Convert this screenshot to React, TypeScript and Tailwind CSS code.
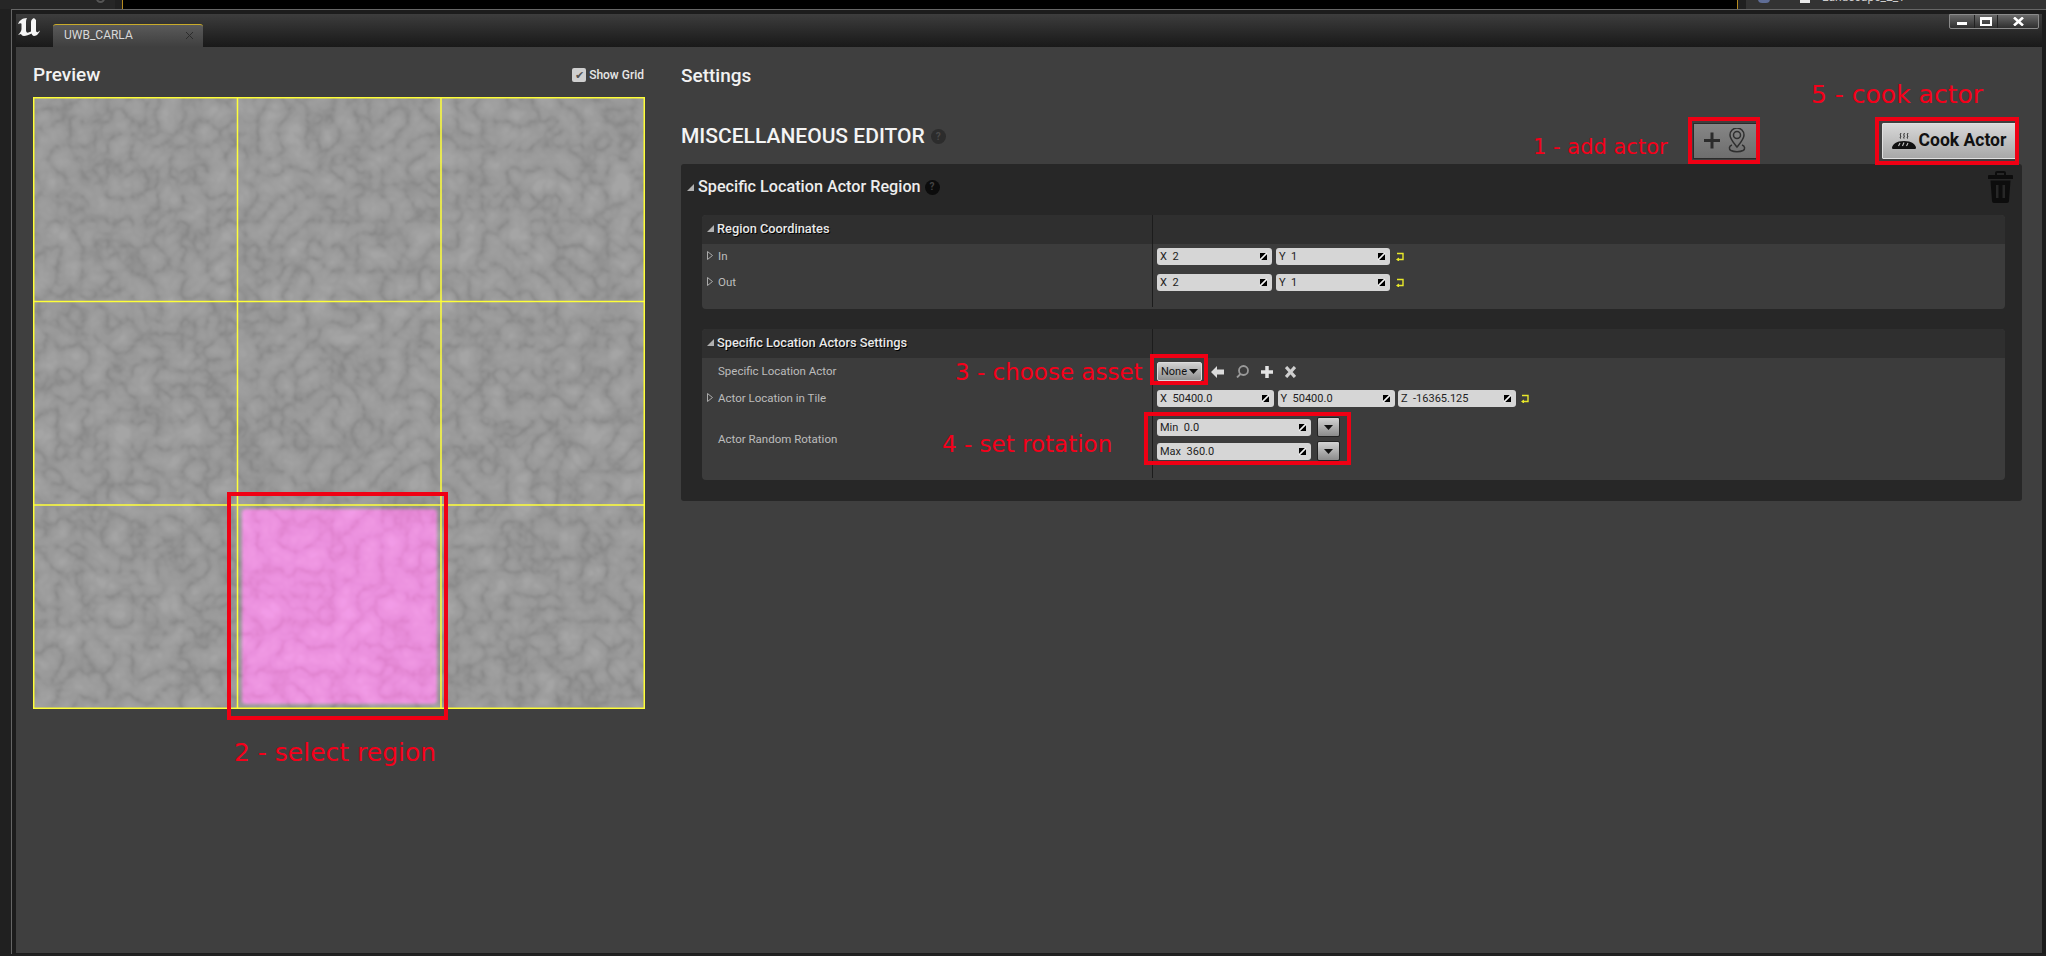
import type { ReactNode } from "react";

function Spinner() {
  return (
    <svg width="9" height="9" viewBox="0 0 9 9" className="shrink-0">
      <polygon points="1,1 7,1 1,7" fill="#000" />
      <polygon points="8,8 2,8 8,2" fill="#000" />
      <line x1="1" y1="8" x2="8" y2="1" stroke="#f4f4f4" strokeWidth="1.200" />
    </svg>
  );
}

function ResetIcon() {
  return (
    <svg width="8" height="9" viewBox="0 0 8 9" className="shrink-0">
      <path d="M1 1.500h6v6H1.500" fill="none" stroke="#e8e82a" strokeWidth="1.400" />
      <path d="M3 5.500v4L0 7.500z" fill="#e8e82a" />
    </svg>
  );
}

function NumberBox({ label, value, className }: { label: string; value: string; className: string }) {
  return (
    <div className={`flex h-[17px] items-center justify-between rounded-[3px] bg-[#d6d6d6] pl-[3px] pr-[4px] text-[11px] leading-none text-[#222] ${className}`}>
      <span className="whitespace-pre">{label}  {value}</span>
      <Spinner />
    </div>
  );
}

function Caret() {
  return (
    <svg width="9" height="5" viewBox="0 0 9 5">
      <polygon points="0,0 9,0 4.500,5" fill="#111" />
    </svg>
  );
}

function ComboButton() {
  return (
    <div className="flex h-[20px] w-[23px] items-center justify-center rounded-[2px] border border-[#222] bg-gradient-to-b from-[#d4d4d4] to-[#8c8c8c]">
      <Caret />
    </div>
  );
}

function Triangle({ open }: { open?: boolean }) {
  if (open) {
    return (
      <svg width="7" height="7" viewBox="0 0 7 7" className="shrink-0">
        <polygon points="7,0 7,7 0,7" fill="#b0b0b0" />
      </svg>
    );
  }
  return (
    <svg width="6" height="9" viewBox="0 0 6 9" className="shrink-0">
      <polygon points="0.500,0.500 5.500,4.500 0.500,8.500" fill="none" stroke="#aaa" strokeWidth="1" />
    </svg>
  );
}

function HelpDot({ dark }: { dark?: boolean }) {
  return (
    <div className={`flex h-[15px] w-[15px] items-center justify-center rounded-full text-[10px] font-bold leading-none ${dark ? "bg-[#0c0c0c] text-[#444]" : "bg-[#2c2c2c] text-[#4a4a4a]"}`}>
      ?
    </div>
  );
}

function GroupHeader({ title }: { title: string }) {
  return (
    <div className="grid h-[29px] grid-cols-[450px_1fr] rounded-t-[4px] bg-[#2f2f2f]">
      <div className="flex items-center gap-[3px] pb-[2px] pl-[5px] text-[12.800px] font-medium text-[#e8e8e8] [text-shadow:1px_1px_0_#000]">
        <Triangle open />
        {title}
      </div>
      <div className="border-l border-[#1c1c1c]" />
    </div>
  );
}

function Row({ label, expand, height, children, labelTop = "pt-[7px]" }: { label: string; expand?: boolean; height: string; children?: ReactNode; labelTop?: string }) {
  return (
    <div className={`grid grid-cols-[450px_1fr] ${height}`}>
      <div className={`flex items-start gap-[5px] pl-[5px] text-[11.500px] leading-none text-[#bdbdbd] ${labelTop}`}>
        <div className="flex w-[6px] justify-center">{expand ? <Triangle /> : null}</div>
        {label}
      </div>
      <div className="border-l border-[#1c1c1c] pl-[4px]">{children}</div>
    </div>
  );
}

function Note({ children, className }: { children: ReactNode; className: string }) {
  return (
    <div className={`absolute whitespace-nowrap font-['DejaVu_Sans',sans-serif] leading-none text-[#f5001a] ${className}`}>
      {children}
    </div>
  );
}

function Marker({ className }: { className: string }) {
  return <div className={`absolute border-[4px] border-[#f00014] ${className}`} />;
}

function TilePreview() {
  return (
    <svg width="612" height="612" viewBox="0 0 612 612" className="block">
      <defs>
        <filter id="marble" x="0" y="0" width="612" height="612" filterUnits="userSpaceOnUse" colorInterpolationFilters="sRGB">
          <feTurbulence type="turbulence" baseFrequency="0.04" numOctaves="3" seed="7" />
          <feColorMatrix values="1.5 0 0 0 0 1.5 0 0 0 0 1.5 0 0 0 0 0 0 0 0 1" />
          <feGaussianBlur stdDeviation="0.9" />
          <feComponentTransfer>
            <feFuncR type="table" tableValues="0.52 0.57 0.6 0.615 0.63 0.65" />
            <feFuncG type="table" tableValues="0.52 0.57 0.6 0.615 0.63 0.65" />
            <feFuncB type="table" tableValues="0.52 0.57 0.6 0.615 0.63 0.65" />
          </feComponentTransfer>
        </filter>
        <filter id="marble-pink" x="0" y="0" width="612" height="612" filterUnits="userSpaceOnUse" colorInterpolationFilters="sRGB">
          <feTurbulence type="turbulence" baseFrequency="0.04" numOctaves="3" seed="7" />
          <feColorMatrix values="1.5 0 0 0 0 1.5 0 0 0 0 1.5 0 0 0 0 0 0 0 0 1" />
          <feGaussianBlur stdDeviation="0.9" />
          <feComponentTransfer>
            <feFuncR type="table" tableValues="0.87 0.9 0.92 0.93 0.94 0.95" />
            <feFuncG type="table" tableValues="0.5 0.54 0.565 0.58 0.595 0.61" />
            <feFuncB type="table" tableValues="0.8 0.84 0.87 0.88 0.89 0.91" />
          </feComponentTransfer>
        </filter>
        <filter id="soft" x="-5%" y="-5%" width="110%" height="110%">
          <feGaussianBlur stdDeviation="1.500" />
        </filter>
        <mask id="pink-cell" maskUnits="userSpaceOnUse" x="0" y="0" width="612" height="612">
          <rect x="209" y="412" width="195" height="195" rx="4" fill="#fff" filter="url(#soft)" />
        </mask>
      </defs>
      <rect width="612" height="612" fill="#9c9c9c" filter="url(#marble)" />
      <g mask="url(#pink-cell)">
        <rect width="612" height="612" fill="#ee90e0" filter="url(#marble-pink)" />
      </g>
      <g fill="none" stroke="#ffff38" strokeWidth="1.500">
        <rect x="0.750" y="0.750" width="610.500" height="610.500" />
        <line x1="204.500" y1="0" x2="204.500" y2="612" />
        <line x1="408" y1="0" x2="408" y2="612" />
        <line x1="0" y1="204.500" x2="612" y2="204.500" />
        <line x1="0" y1="408" x2="612" y2="408" />
      </g>
    </svg>
  );
}

function TrashIcon() {
  return (
    <svg width="25" height="32" viewBox="0 0 25 32" fill="#0d0d0d">
      <path d="M9 0h7a2 2 0 0 1 2 2v2h6a1 1 0 0 1 1 1v3H0V5a1 1 0 0 1 1-1h6V2a2 2 0 0 1 2-2zm0 2v2h7V2z" fillRule="evenodd" />
      <path d="M2.500 9.500h20L21 30a2 2 0 0 1-2 2H6a2 2 0 0 1-2-2zM8 14v13h2.500V14zm6.500 0v13H17V14z" fillRule="evenodd" />
    </svg>
  );
}

function LogoMark() {
  return (
    <svg width="22" height="18" viewBox="0 0 22 18" fill="#f6f6f6">
      <path d="M0 6C1 3 4 0 9 0 8 2 8 3 8 5v7c0 2 1 3 2.500 2.500L13 13.500V4c0-2 1-3 3-4l2 2v10c0 2 1 2.500 2 2l2-1.500C21 15 19 18 16 18c-1 0-2-1-2.500-2.500C11 17 8 18 6 18c-1.500 0-2.500-1-3-2l-3 1c2-2 3.500-4 3.500-6V6C3.500 5 2 5 0 6z" />
    </svg>
  );
}

function WindowButtons() {
  return (
    <div className="flex h-[15px] items-stretch overflow-hidden rounded-b-[2px] border border-[#8a8a8a] bg-gradient-to-b from-[#6a6a6a] to-[#2f2f2f]">
      <div className="flex w-[25px] items-center justify-center border-r border-[#222]">
        <div className="mt-[3px] h-[3px] w-[10px] bg-white" />
      </div>
      <div className="flex w-[23px] items-center justify-center border-r border-[#222]">
        <div className="h-[9px] w-[12px] border-[2px] border-t-[3px] border-white" />
      </div>
      <div className="flex w-[40px] items-center justify-center">
        <svg width="11" height="9" viewBox="0 0 11 9" stroke="#fff" strokeWidth="2.600">
          <path d="M1 0.500l9 8M10 0.500l-9 8" />
        </svg>
      </div>
    </div>
  );
}

function CookIcon() {
  return (
    <svg width="24" height="16" viewBox="0 0 24 16" className="shrink-0">
      <g fill="none" stroke="#111" strokeWidth="1">
        <path d="M8.500 5.500c-1-1 1-2 0-3s1-1.500 0-2.500" />
        <path d="M12 5.500c-1-1 1-2 0-3s1-1.500 0-2.500" />
        <path d="M15.500 5.500c-1-1 1-2 0-3s1-1.500 0-2.500" />
      </g>
      <path d="M0 14.500C1 11 4 8 12 8s11 3 12 6.500c0 .8-.4 1.500-1 1.500H1c-.6 0-1-.7-1-1.500z" fill="#111" />
      <path d="M8 10l-1.500 3M12 9.500l-1.500 3.500M16 10l-1.500 3" stroke="#c4c4c4" strokeWidth="1.100" />
    </svg>
  );
}

function AddActorIcon() {
  return (
    <svg width="42" height="26" viewBox="0 0 42 26">
      <path d="M0 12.500h16M8 4.500v16" stroke="#2b2b2b" strokeWidth="3" fill="none" />
      <g fill="none" stroke="#2f2f2f" strokeWidth="1.500">
        <path d="M33 19c-4-5-7-8-7-12a7 7 0 0 1 14 0c0 4-3 7-7 12z" />
        <circle cx="33" cy="7" r="3.500" />
        <path d="M28 17c-3 1-3.500 4-1 5.500 3 1.500 9 1.500 12 0 2.500-1.500 2-4.500-1-5.500" />
      </g>
    </svg>
  );
}

function PickerIcons() {
  return (
    <div className="ml-[9px] flex items-center gap-[12px]">
      <svg width="13" height="12" viewBox="0 0 13 12" fill="#dcdcdc">
        <path d="M6 0v3.500h7v5H6V12L0 6z" />
      </svg>
      <svg width="13" height="13" viewBox="0 0 13 13" fill="none" stroke="#9a9a9a" strokeWidth="1.800">
        <circle cx="7.500" cy="5.500" r="4.500" />
        <path d="M4.500 9L1 12.500" />
      </svg>
      <svg width="12" height="12" viewBox="0 0 12 12" stroke="#e4e4e4" strokeWidth="3.500">
        <path d="M6 0v12M0 6h12" />
      </svg>
      <svg width="11" height="12" viewBox="0 0 11 12" stroke="#cfcfcf" strokeWidth="3.200">
        <path d="M1 1l9 10M10 1L1 11" />
      </svg>
    </div>
  );
}

export default function App() {
  return (
    <div className="relative h-[956px] w-[2046px] overflow-hidden bg-[#202020] font-['Roboto',sans-serif]">
      {/* what shows of the editor behind the window */}
      <div className="flex h-[9px] overflow-hidden">
        <div className="flex w-[115px] justify-end bg-[#262626] pr-[10px]">
          <div className="-mt-[6px] h-[9px] w-[9px] rounded-full border-2 border-[#555]" />
        </div>
        <div className="ml-[7px] w-[1616px] border-x border-[#b58a1e] bg-black" />
        <div className="ml-[8px] flex flex-1 bg-[#333] pl-[12px] text-[12px] leading-none text-[#ccc]">
          <div className="-mt-[5px] h-[8px] w-[12px] rounded-full bg-[#5f6d96]" />
          <div className="ml-[30px] -mt-[1px] h-[4px] w-[10px] bg-[#e8e8e8]" />
          <div className="ml-[12px] -mt-[9px]">Landscape_2_1</div>
        </div>
      </div>

      <div className="ml-[11px] flex h-[945px] flex-col border-l border-t border-[#666] bg-[#1c1c1c] pl-[4px] pr-[4px] pt-[4px]">
        <div className="flex h-[33px] bg-gradient-to-b from-[#3d3d3d] to-[#191919]">
          <div className="w-[37px] pl-[2px] pt-[4px]">
            <LogoMark />
          </div>
          <div className="mt-[10px] flex w-[150px] items-center justify-between rounded-t-[3px] border-t border-[#c9ab2a] bg-gradient-to-b from-[#5a5a5a] to-[#3f3f3f] pb-[2px] pl-[11px] pr-[10px] text-[12px] text-[#d8d8d8]">
            UWB_CARLA
            <svg width="7" height="7" viewBox="0 0 7 7" stroke="#2b2b2b" strokeWidth="1">
              <path d="M0 0l7 7M7 0L0 7" />
            </svg>
          </div>
          <div className="ml-auto pr-[3px]">
            <WindowButtons />
          </div>
        </div>

        <div className="flex h-[906px] bg-[#3f3f3f]">
          <div className="w-[665px] pl-[17px]">
            <div className="flex h-[50px] items-center justify-between pr-[37px] pt-[6px]">
              <div className="-mt-[2px] text-[19px] font-medium leading-none text-[#f2f2f2]">Preview</div>
              <div className="flex items-center gap-[3px] text-[12px] font-medium text-[#e6e6e6]">
                <div className="flex h-[14px] w-[14px] items-center justify-center rounded-[2px] bg-[#cfcfcf] text-[11px] leading-none text-[#555]">✔</div>
                Show Grid
              </div>
            </div>
            <TilePreview />
          </div>

          <div className="w-[1341px]">
            <div className="flex h-[56px] items-center text-[19px] font-medium leading-none text-[#f2f2f2]">Settings</div>
            <div className="flex h-[61px] items-start">
              <div className="mt-[23px] flex items-center gap-[6px] text-[21px] font-medium leading-none text-[#f4f4f4]">
                MISCELLANEOUS EDITOR
                <HelpDot />
              </div>
              <div className="ml-auto mt-[20px] flex h-[36px] w-[64px] items-center justify-center border border-[#2a2a2a] bg-gradient-to-b from-[#868686] to-[#6e6e6e]">
                <AddActorIcon />
              </div>
              <div className="ml-[125px] mr-[6px] mt-[20px] flex h-[36px] w-[134px] items-center justify-center gap-[3px] rounded-[1px] border border-[#e0e0e0] bg-gradient-to-b from-[#d8d8d8] to-[#a8a8a8] text-[17.500px] font-bold leading-none text-[#111]">
                <CookIcon />
                Cook Actor
              </div>
            </div>

            <div className="h-[337px] rounded-[3px] bg-[#272727]">
              <div className="flex h-[51px] items-start justify-between pr-[9px]">
                <div className="mt-[14px] flex items-center gap-[4px] pl-[6px] text-[16.200px] font-medium leading-[18px] text-[#ededed]">
                  <Triangle open />
                  <span>Specific Location Actor Region</span>
                  <HelpDot dark />
                </div>
                <div className="mt-[7px]">
                  <TrashIcon />
                </div>
              </div>

              <div className="ml-[21px] mr-[17px] h-[94px] overflow-hidden rounded-[4px] bg-[#3c3c3c]">
                <GroupHeader title="Region Coordinates" />
                <Row label="In" expand height="h-[26px]">
                  <div className="flex gap-[4px] pt-[4px]">
                    <NumberBox label="X" value="2" className="w-[115px]" />
                    <NumberBox label="Y" value="1" className="w-[114px]" />
                    <div className="pl-[2px] pt-[4px]"><ResetIcon /></div>
                  </div>
                </Row>
                <Row label="Out" expand height="h-[26px]">
                  <div className="flex gap-[4px] pt-[4px]">
                    <NumberBox label="X" value="2" className="w-[115px]" />
                    <NumberBox label="Y" value="1" className="w-[114px]" />
                    <div className="pl-[2px] pt-[4px]"><ResetIcon /></div>
                  </div>
                </Row>
                <Row label="" height="h-[11px]" />
              </div>

              <div className="ml-[21px] mr-[17px] mt-[20px] h-[151px] overflow-hidden rounded-[4px] bg-[#3c3c3c]">
                <GroupHeader title="Specific Location Actors Settings" />
                <Row label="Specific Location Actor" height="h-[28px]" labelTop="pt-[8px]">
                  <div className="flex items-center pt-[4px]">
                    <div className="flex h-[19px] w-[45px] items-center justify-center gap-[2px] rounded-[2px] border border-[#ddd] bg-gradient-to-b from-[#d2d2d2] to-[#8f8f8f] text-[11px] leading-none text-[#111]">
                      None
                      <Caret />
                    </div>
                    <PickerIcons />
                  </div>
                </Row>
                <Row label="Actor Location in Tile" expand height="h-[25px]">
                  <div className="flex gap-[3.500px] pt-[4px]">
                    <NumberBox label="X" value="50400.0" className="w-[117px]" />
                    <NumberBox label="Y" value="50400.0" className="w-[117px]" />
                    <NumberBox label="Z" value="-16365.125" className="w-[118px]" />
                    <div className="pl-[1px] pt-[4px]"><ResetIcon /></div>
                  </div>
                </Row>
                <Row label="Actor Random Rotation" height="h-[56px]" labelTop="pt-[23px]">
                  <div className="flex flex-col gap-[4px] pt-[6px]">
                    <div className="flex items-center gap-[6px]">
                      <NumberBox label="Min" value="0.0" className="w-[154px]" />
                      <ComboButton />
                    </div>
                    <div className="flex items-center gap-[6px]">
                      <NumberBox label="Max" value="360.0" className="w-[154px]" />
                      <ComboButton />
                    </div>
                  </div>
                </Row>
                <Row label="" height="h-[11px]" />
              </div>
            </div>
          </div>
        </div>
      </div>

      {/* red notes drawn on top of the screenshot */}
      <Marker className="left-[227px] top-[492px] h-[228px] w-[221px]" />
      <Marker className="left-[1688px] top-[117px] h-[47px] w-[72px]" />
      <Marker className="left-[1875px] top-[117px] h-[48px] w-[144px]" />
      <Marker className="left-[1150px] top-[354px] h-[31px] w-[58px]" />
      <Marker className="left-[1144px] top-[412px] h-[53px] w-[207px]" />
      <Note className="left-[234px] top-[740px] text-[25px]">2 - select region</Note>
      <Note className="left-[1533px] top-[137px] text-[21px]">1 - add actor</Note>
      <Note className="left-[1811px] top-[82px] text-[25px]">5 - cook actor</Note>
      <Note className="left-[955px] top-[361px] text-[23px]">3 - choose asset</Note>
      <Note className="left-[942px] top-[433px] text-[23px]">4 - set rotation</Note>
    </div>
  );
}
